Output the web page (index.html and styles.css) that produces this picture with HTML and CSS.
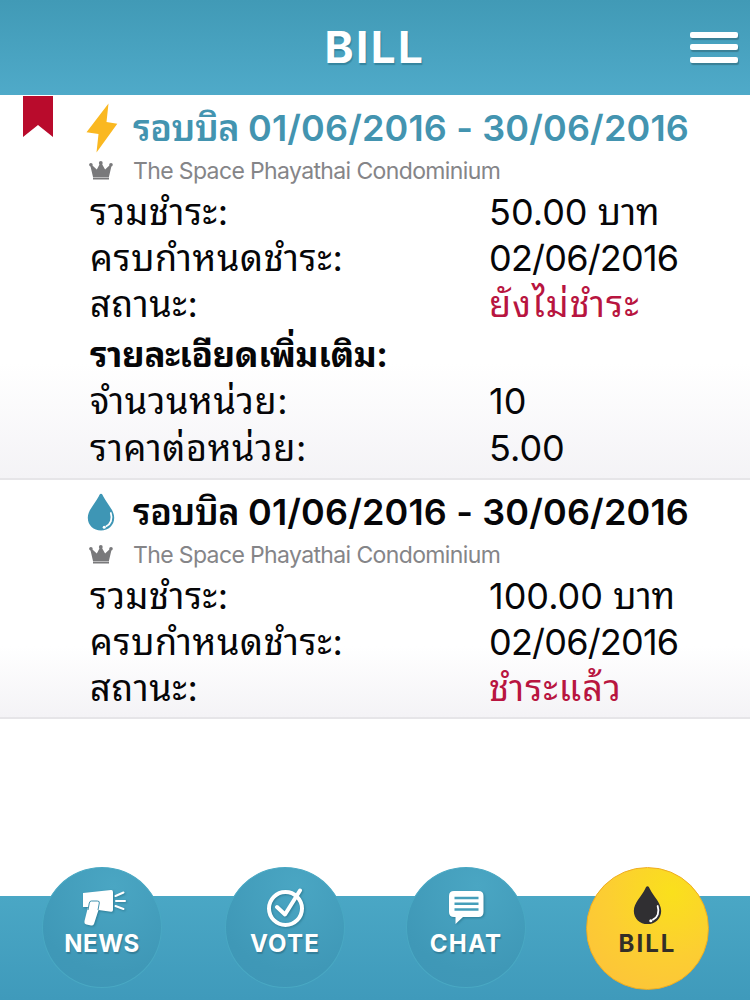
FILE: index.html
```html
<!DOCTYPE html>
<html lang="th">
<head>
<meta charset="utf-8">
<title>Bill</title>
<link rel="stylesheet" href="styles.css">
</head>
<body>
<svg class="defs" width="0" height="0" aria-hidden="true">
  <symbol id="crown" viewBox="0 0 24 19">
    <path d="M4 16 1.300 4.400 2.600 3.800 7.800 8.600 11 2.500h1.700l3.400 6.100 5.100-4.800 1.400.6L19.900 16z"/><path d="M4 16.500h16v2H4z"/>
    <circle cx="1.900" cy="3.800" r="1.800"/><circle cx="11.800" cy="1.900" r="1.900"/><circle cx="22" cy="3.800" r="1.800"/>
  </symbol>
  <symbol id="drop" viewBox="0 0 28 38">
    <path d="M14 .8C15.200.8 15.500 2 16.200 3.300 20 11 27.200 17 27.200 24.700c0 7.500-5.800 12.700-13.200 12.700S.8 32.200.8 24.700C.8 17 8 11 11.800 3.300 12.500 2 12.800.8 14 .8z"/>
    <path class="shine" d="M23.800 20c2 6-.2 11.300-4.500 13.200"/><circle class="shine-dot" cx="17.200" cy="34.200" r="1.500"/>
  </symbol>
</svg>
<div class="app">
  <header class="header">
    <h1 class="title">BILL</h1>
    <button class="menu" aria-label="Menu"><i></i><i></i><i></i></button>
  </header>
  <main class="list">
    <section class="bill bill-unpaid">
      <svg class="ribbon" viewBox="0 0 30 41"><path d="M0 0h30v41L15 29 0 41z"/></svg>
      <div class="bill-head">
        <svg class="bolt" viewBox="0 0 32 50"><path d="M22.500.5 20.500 19 31.300 20.700 10.500 49.500 12.500 31 .5 29.300z"/></svg>
        <h2 class="period"><span class="th">รอบบิล</span><span class="dates">01/06/2016 - 30/06/2016</span></h2>
      </div>
      <div class="place"><svg class="crown"><use href="#crown"/></svg><span>The Space Phayathai Condominium</span></div>
      <dl class="rows">
        <div class="row"><dt>รวมชำระ:</dt><dd>50.00 <span class="th">บาท</span></dd></div>
        <div class="row"><dt>ครบกำหนดชำระ:</dt><dd class="date">02/06/2016</dd></div>
        <div class="row"><dt>สถานะ:</dt><dd class="status"><span class="th">ยังไม่ชำระ</span></dd></div>
        <div class="row row-more"><dt>รายละเอียดเพิ่มเติม:</dt></div>
        <div class="row row-detail"><dt>จำนวนหน่วย:</dt><dd>10</dd></div>
        <div class="row row-detail"><dt>ราคาต่อหน่วย:</dt><dd>5.00</dd></div>
      </dl>
    </section>
    <section class="bill bill-paid">
      <div class="bill-head">
        <svg class="drop"><use href="#drop"/></svg>
        <h2 class="period"><span class="th">รอบบิล</span><span class="dates">01/06/2016 - 30/06/2016</span></h2>
      </div>
      <div class="place"><svg class="crown"><use href="#crown"/></svg><span>The Space Phayathai Condominium</span></div>
      <dl class="rows">
        <div class="row"><dt>รวมชำระ:</dt><dd>100.00 <span class="th">บาท</span></dd></div>
        <div class="row"><dt>ครบกำหนดชำระ:</dt><dd class="date">02/06/2016</dd></div>
        <div class="row"><dt>สถานะ:</dt><dd class="status"><span class="th">ชำระแล้ว</span></dd></div>
      </dl>
    </section>
  </main>
  <nav class="tabs">
    <a class="tab"><svg class="tab-icon" viewBox="0 0 48 40"><path d="M5 5 33 2q2-.2 2 2v18q0 2-2 1.700L20.500 22 16 36q-1 2-3 1.500l-4.500-1Q6 36 6.500 33L10 19H5z"/><path class="cut" d="M10 22l1.300-7q.5-2 2-2h6q2.500 0 2 2L20 22"/><path class="rays" d="m37.500 8 8-3.500M38 13h9M37.500 18l8 3"/></svg><span>NEWS</span></a>
    <a class="tab"><svg class="tab-icon" viewBox="0 0 48 40"><circle class="ring" cx="24.500" cy="20.500" r="16.500"/><path class="tick" d="M16 19l8 7.500L39 2.500"/></svg><span>VOTE</span></a>
    <a class="tab"><svg class="tab-icon" viewBox="0 0 48 40"><path d="M12 3h24.500q5 0 5 5v16q0 5-5 5H21l-7.500 7V29H12q-5 0-5-5V8q0-5 5-5z"/><path class="lines" d="M12.500 10h24M12.500 15.800h24M12.500 21.600h24"/></svg><span>CHAT</span></a>
    <a class="tab tab-active"><svg class="tab-drop"><use href="#drop"/></svg><span>BILL</span></a>
  </nav>
</div>
</body>
</html>
```
FILE: styles.css
```css
* { box-sizing: border-box; }
body, h1, h2, dl, dd { margin: 0; }
body { background: #fff; font-family: Inter, "Noto Sans Thai Looped", Loma, Garuda, Waree, "Liberation Sans", sans-serif; color: #060608; }
svg { display: block; flex: none; }
.defs { position: absolute; }
.app { width: 750px; height: 1000px; display: flex; flex-direction: column; overflow: hidden; }
.header { height: 95px; flex: none; display: grid; grid-template-columns: 60px 1fr 60px; align-items: center; background: linear-gradient(#419ab6, #4faac9); }
.title { grid-column: 2; text-align: center; color: #fff; font-size: 44px; line-height: 95px; font-weight: 700; letter-spacing: 2.400px; text-shadow: 1px 2px 1px #34859f; }
.menu { grid-column: 3; width: 48px; height: 31px; padding: 0; border: 0; background: none; display: flex; flex-direction: column; justify-content: space-between; margin-bottom: 1px; }
.menu i { height: 6px; border-radius: 2px; background: #fff; box-shadow: 1px 2px 1px #397f95; }
.list { flex: 1; }
.bill { position: relative; border-bottom: 2px solid #e6e5e8; background: linear-gradient(#fff 0, #fff 70%, #f4f3f6 100%); }
.bill-unpaid { height: 385px; }
.bill-paid { height: 239px; }
.ribbon { position: absolute; left: 23px; top: 1px; width: 30px; height: 41px; fill: #b90b2c; }
.bill-head { height: 66px; padding-left: 86px; display: flex; align-items: center; }
.bill-paid .bill-head { height: 64px; margin-bottom: 1px; }
.bolt { width: 32px; height: 50px; fill: #fab821; }
.drop { width: 28px; height: 38px; margin: 0 3px 0 1px; fill: #3e96b5; }
.shine { fill: none; stroke: #fff; stroke-width: 1.8; stroke-linecap: round; }
.shine-dot { fill: #fff; }
.period { display: flex; margin-left: 15px; font-size: 36px; line-height: 64px; font-weight: 600; white-space: nowrap; }
.period .th { width: 115px; letter-spacing: -.4px; }
.dates { letter-spacing: .15px; }
.bill-unpaid .period { color: #4394b0; }
.place { height: 19px; margin-bottom: 1px; padding-left: 89px; display: flex; align-items: center; gap: 20px; color: #858588; font-size: 23px; letter-spacing: -.63px; white-space: nowrap; }
.crown { width: 24px; height: 19px; fill: #79797b; }
.rows { padding: 8px 0 0 90px; }
.row { display: grid; grid-template-columns: 399px 1fr; height: 46px; font-size: 36px; line-height: 46px; white-space: nowrap; }
.row dt { letter-spacing: .65px; }
.row-more { height: 51px; line-height: 54px; font-weight: 700; }
.row-more dt { font-size: 35px; letter-spacing: -.4px; }
.row-detail { height: 47px; line-height: 47px; }
.date { letter-spacing: -.8px; }
.status { color: #b81540; letter-spacing: 1.100px; }
.tabs { height: 104px; flex: none; display: flex; padding-left: 42px; background: linear-gradient(#4aa7c5, #3f9abb); }
.tab { width: 120px; height: 121px; margin: -29px 62px 0 0; flex: none; display: flex; flex-direction: column; align-items: center; border-radius: 50%; border: 1px solid #49a8c3; background: radial-gradient(circle at 60% 15%, #4aa6c3, #3f98b7 70%, #3e96b7); color: #fff; font-size: 24px; font-weight: 700; line-height: 28px; letter-spacing: 1.200px; text-shadow: 1px 2px 1px #347f99; }
.tab:first-child { letter-spacing: .6px; }
.tab-icon { width: 48px; height: 40px; margin: 20px 0 2px; fill: #fff; filter: drop-shadow(1px 1px 1px #2e7d96); }
.cut { stroke: #3e91ad; stroke-width: 1; }
.rays, .ring, .tick { fill: none; stroke: #fff; stroke-width: 2; stroke-linecap: round; stroke-linejoin: round; }
.ring, .tick { stroke-width: 4; }
.lines { stroke: #459eba; stroke-width: 2.500; }
.tab:nth-child(2) { margin-left: 1px; margin-right: 61px; }
.tab.tab-active { width: 123px; height: 123px; margin-left: -2px; margin-right: 0; border-color: #efad22; background: radial-gradient(circle at 70% 20%, #fae01c, #fcce32 50%, #fcc03c); color: #332e28; text-shadow: none; letter-spacing: 2px; }
.tab-drop { width: 29px; height: 40px; margin: 17px 0 5px; fill: #302f32; }
```
